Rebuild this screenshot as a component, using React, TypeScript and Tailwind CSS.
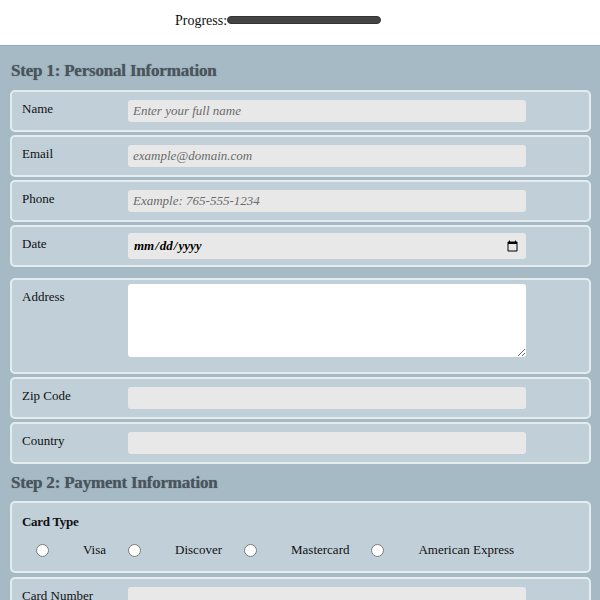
const font = { fontFamily: '"Liberation Serif", "Times New Roman", serif' };

interface RowProps {
  label: string;
  placeholder?: string;
  type?: string;
}

const boxCls = 'rounded-[5px] border-2 border-[#e4ecf0] bg-[#c0cfd8]';
const inputCls =
  'h-[22px] w-[398px] rounded-[3px] bg-[#e8e8e8] px-[5px] text-[13px] italic text-black outline-none placeholder:text-[#6b6b6b]';

const Row = ({ label, placeholder, type = 'text' }: RowProps) => (
  <div className={`${boxCls} flex items-start py-[8px] pl-[10px]`}>
    <label className="w-[106px] text-[13px] leading-[18px] text-[#111]">{label}</label>
    <input type={type} placeholder={placeholder} className={inputCls} />
  </div>
);

const Heading = ({ children }: { children: string }) => (
  <h2 className="pl-[1px] text-[17px] font-bold leading-[20px] tracking-[-0.2px] text-[#4a545c] [text-shadow:0_0_1px_rgba(60,70,80,0.6)]">
    {children}
  </h2>
);

const cards = ['Visa', 'Discover', 'Mastercard', 'American Express'];

export default function App() {
  return (
    <div className="min-h-[600px] bg-[#a6bac5]" style={font}>
      {/* Header */}
      <div className="flex h-[46px] items-start border-b border-[#95abb7] bg-white pl-[175px] pt-[11px]">
        <span className="text-[14px] leading-[20px] text-[#111]">Progress:</span>
        <div className="mt-[5px] h-[8px] w-[154px] rounded-full border border-[#333] bg-[#444]" />
      </div>

      <div className="pl-[10px] pr-[9px] pt-[15px]">
        <Heading>Step 1: Personal Information</Heading>

        <div className="mt-[9px] flex flex-col gap-[3px]">
          <Row label="Name" placeholder="Enter your full name" />
          <Row label="Email" placeholder="example@domain.com" />
          <Row label="Phone" placeholder="Example: 765-555-1234" />
          <div className={`${boxCls} flex items-start py-[6px] pl-[10px]`}>
            <label className="mt-[2px] w-[106px] text-[13px] leading-[18px] text-[#111]">Date</label>
            <input
              type="date"
              className="h-[26px] w-[398px] rounded-[3px] bg-[#e8e8e8] px-[5px] text-[13px] font-bold italic text-black outline-none"
            />
          </div>
        </div>

        <div className="mt-[11px] flex flex-col gap-[3px]">
          <div className={`${boxCls} flex items-start pb-[15px] pl-[10px] pt-[4px]`}>
            <label className="mt-[4px] w-[106px] text-[13px] leading-[18px] text-[#111]">Address</label>
            <textarea className="block h-[73px] w-[398px] rounded-[3px] bg-white outline-none" />
          </div>
          <Row label="Zip Code" />
          <Row label="Country" />
        </div>

        <div className="mt-[9px]">
          <Heading>Step 2: Payment Information</Heading>
        </div>

        <div className="mt-[8px] flex flex-col gap-[4px]">
          <div className={`${boxCls} px-[10px] pb-[11px] pt-[10px]`}>
            <div className="text-[13px] font-semibold leading-[18px] tracking-[-0.3px] text-[#111]">Card Type</div>
            <div className="mt-[9px] flex items-center pl-[14px]">
              {cards.map((c) => (
                <label key={c} className="mr-[22px] flex items-center text-[13px] leading-[20px] text-[#111]">
                  <input type="radio" name="card" className="m-0 h-[13px] w-[13px]" />
                  <span className="ml-[34px]">{c}</span>
                </label>
              ))}
            </div>
          </div>
          <Row label="Card Number" />
          <Row label="Expiry" />
        </div>
      </div>
    </div>
  );
}
